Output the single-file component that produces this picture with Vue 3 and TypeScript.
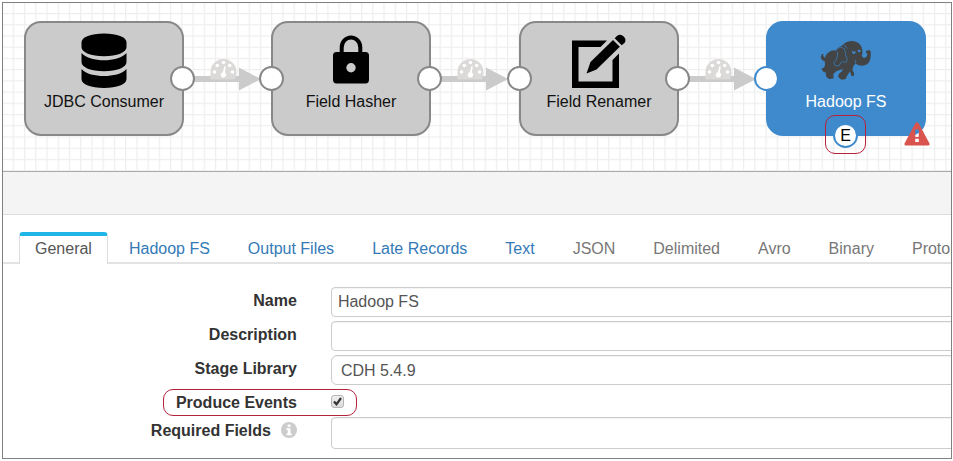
<script setup lang="ts">
import { ref } from 'vue'

type IconName = 'database' | 'lock' | 'edit' | 'elephant'

interface Stage {
  label: string
  icon: IconName
  x: number
  input: boolean
  output: boolean
  selected: boolean
}

interface Tab {
  label: string
  state: 'active' | 'link' | 'disabled'
}

const stages: Stage[] = [
  { label: 'JDBC Consumer', icon: 'database', x: 21, input: false, output: true, selected: false },
  { label: 'Field Hasher', icon: 'lock', x: 268, input: true, output: true, selected: false },
  { label: 'Field Renamer', icon: 'edit', x: 516, input: true, output: true, selected: false },
  { label: 'Hadoop FS', icon: 'elephant', x: 763, input: true, output: false, selected: true },
]

const wires: number[] = [190, 437, 685]

const tabs: Tab[] = [
  { label: 'General', state: 'active' },
  { label: 'Hadoop FS', state: 'link' },
  { label: 'Output Files', state: 'link' },
  { label: 'Late Records', state: 'link' },
  { label: 'Text', state: 'link' },
  { label: 'JSON', state: 'disabled' },
  { label: 'Delimited', state: 'disabled' },
  { label: 'Avro', state: 'disabled' },
  { label: 'Binary', state: 'disabled' },
  { label: 'Protobuf', state: 'disabled' },
]

const name = ref('Hadoop FS')
const description = ref('')
const library = ref('CDH 5.4.9')
const produceEvents = ref(true)
const requiredFields = ref('')
</script>

<template>
  <main class="frame">
    <section class="canvas">
      <svg class="wires" aria-hidden="true">
        <defs>
          <pattern id="grid" x="9.7" y="10" width="11.235" height="11.22" patternUnits="userSpaceOnUse">
            <path d="M.6 0V11.3M0 .6H11.3" stroke="#eeeeee" stroke-width="1.2" fill="none" />
          </pattern>
        </defs>
        <rect width="100%" height="100%" fill="url(#grid)" />
        <g v-for="x in wires" :key="x" :transform="`translate(${x} 0)`">
          <path d="M0 73H46V64.500L68 76L46 87.500V79H0Z" fill="#cbcbcb" />
          <path d="M18 76.500C16.500 74 17.500 76 17.500 69A13 13 0 0 1 43.500 69C43.500 72 43.500 74 41.500 76.500Z" fill="#dcdad9" />
          <g fill="#fff">
            <circle cx="21.500" cy="69" r="1.800" />
            <circle cx="24.300" cy="62.500" r="1.800" />
            <circle cx="30.500" cy="59.500" r="1.800" />
            <circle cx="36.700" cy="62.500" r="1.800" />
            <circle cx="39.500" cy="69" r="1.800" />
            <path d="M31.500 63L32.800 63.400L31.800 69.500A2.700 2.700 0 1 1 29.800 69.200Z" />
          </g>
        </g>
      </svg>

      <div
        v-for="stage in stages"
        :key="stage.label"
        class="stage"
        :class="{ selected: stage.selected }"
        :style="{ left: stage.x + 'px' }"
      >
        <svg class="stage-icon" viewBox="0 0 56 56" aria-hidden="true">
          <g v-if="stage.icon === 'database'">
            <path d="M5.500 9.500C5.500 4 15 .500 28 .500S50.500 4 50.500 9.500V14C50.500 19.500 41 23.300 28 23.300S5.500 19.500 5.500 14Z" />
            <path d="M5.500 20C10 25 19 27.300 28 27.300S46 25 50.500 20V29C50.500 34.500 41 38.300 28 38.300S5.500 34.500 5.500 29Z" />
            <path d="M5.500 36C10 41 19 43 28 43S46 41 50.500 36V46C50.500 51.500 41 55 28 55S5.500 51.500 5.500 46Z" />
          </g>
          <g v-else-if="stage.icon === 'lock'">
            <path d="M18.700 20V14.500A9.300 10 0 0 1 37.300 14.500V20" fill="none" stroke="#000" stroke-width="4" />
            <path
              fill-rule="evenodd"
              d="M13.500 19H42.500Q46 19 46 22.500V46.500Q46 50.500 42.500 50.500H13.500Q10 50.500 10 46.500V22.500Q10 19 13.500 19ZM28 30A4.700 4.700 0 1 0 28 39.400A4.700 4.700 0 1 0 28 30Z"
            />
          </g>
          <g v-else-if="stage.icon === 'edit'">
            <path d="M1 7.500H36L29.500 14H7.500V48.500H41.500V27L48 20.500V55H1Z" />
            <path d="M15.500 40.500L19.500 29L42 7L48.800 13.800L25.500 36.500Z" />
            <path d="M43.700 5.300L46.200 2.800A5.300 5.300 0 0 1 53.700 9.800L50.700 12.300Z" />
          </g>
          <g v-else transform="translate(-8.300 -3) scale(.3333)">
            <path
              class="hide"
              d="M78 61C62 60 49 70 46 84C44 80 42 79 40 77L42 72L36 73L33 82L37 90L45 94C46 103 47 110 42 113L35 116L42 127L48 127L49 138C52 143 56 146 61 147L72 145L71 132L80 124L99 117L97 124L89 130L85 138C88 145 92 148 97 149L108 147L112 137L121 124L125 137L132 139L133 128L128 119L132 106L138 101C148 108 162 109 172 103C182 96 184 82 183 64L178 60L170 62L168 67L173 72C173 80 167 85 161 83L156 78C161 67 158 49 147 40C134 31 116 31 103 41L94 49Q86 50 78 61Z"
            />
            <path class="crease" d="M78 64C84 53 93 49 101 54C108 59 106 69 109 78C114 88 113 96 107 97C101 97 97 92 93 99Q90 110 81 108Q71 106 73 98C80 90 84 80 84 66" />
            <path class="crease" d="M102 45Q110 48 113 56" />
            <path class="crease" d="M137 101Q140 94 136 89" />
            <path class="eye" d="M126 61L132 66L138 63L137 70Q131 74 128 69ZM143 60L151 59L153 65L147 67Z" />
          </g>
        </svg>
        <span class="stage-label">{{ stage.label }}</span>
        <span v-if="stage.input" class="port port-in"></span>
        <span v-if="stage.output" class="port port-out"></span>
        <template v-if="stage.selected">
          <span class="port port-event">E</span>
          <span class="callout event-callout"></span>
          <svg class="warning" viewBox="0 0 26 24" role="img" aria-label="Stage has errors">
            <path
              fill="#d9534f"
              fill-rule="evenodd"
              d="M11.500 1Q13 -.500 14.500 1L25.500 21.500Q26 23.500 24 23.500H2Q0 23.500 .500 21.500ZM11 7.500L11.400 15H14.600L15 7.500ZM11.200 16.700V20H14.800V16.700Z"
            />
          </svg>
        </template>
      </div>
    </section>

    <div class="panel-bar"></div>

    <nav class="tabs">
      <a
        v-for="tab in tabs"
        :key="tab.label"
        href="#"
        class="tab"
        :class="tab.state"
        @click.prevent
      >{{ tab.label }}</a>
    </nav>

    <form class="form" @submit.prevent>
      <label for="stage-name">Name</label>
      <input id="stage-name" v-model="name" class="field" type="text" />

      <label for="stage-description">Description</label>
      <input id="stage-description" v-model="description" class="field" type="text" />

      <label for="stage-library">Stage Library</label>
      <select id="stage-library" v-model="library" class="field library">
        <option>CDH 5.4.9</option>
      </select>

      <label for="produce-events"><span class="marked">Produce Events<span class="callout row-callout"></span></span></label>
      <span class="check">
        <input id="produce-events" v-model="produceEvents" type="checkbox" />
        <svg v-if="produceEvents" viewBox="0 0 13 13" aria-hidden="true">
          <path d="M3 6.500L5.500 9.300L10 3" fill="none" stroke="#333" stroke-width="2.200" />
        </svg>
      </span>

      <label for="required-fields" class="with-info">
        Required Fields
        <svg viewBox="0 0 16 16" aria-hidden="true">
          <circle cx="8" cy="8" r="8" fill="#cccccc" />
          <path d="M6.700 2.500H9.500V5H6.700ZM5.500 6.300H9.500V11.500H10.700V13.300H5.500V11.500H6.700V8H5.500Z" fill="#fff" />
        </svg>
      </label>
      <input id="required-fields" v-model="requiredFields" class="field tall" type="text" />
    </form>
  </main>
</template>

<style>
body {
  background: #fff;
}
</style>

<style scoped>
.frame {
  margin: 2px 1px 2px 2px;
  border: 1px solid #808080;
  overflow: hidden;
  font-family: "Liberation Sans", Arial, sans-serif;
  font-size: 16px;
  color: #333;
}

.canvas {
  position: relative;
  height: 168px;
  overflow: hidden;
}

.wires {
  display: block;
  width: 100%;
  height: 100%;
}

.stage {
  position: absolute;
  top: 18px;
  box-sizing: border-box;
  width: 160px;
  height: 115px;
  padding-top: 10px;
  border: 2px solid #888;
  border-radius: 17px;
  background: #cbcbcb;
  color: #111;
  display: flex;
  flex-direction: column;
  align-items: center;
  gap: 3px;
}

.stage.selected {
  border-color: #3f8acc;
  background: #3f8acc;
  color: #fff;
}

.stage-icon {
  width: 56px;
  height: 56px;
  flex: none;
}

.stage-label {
  line-height: 20px;
  white-space: nowrap;
}

.hide {
  fill: #424446;
}

.crease {
  fill: none;
  stroke: #3a7db8;
  stroke-width: 2.5;
}

.eye {
  fill: #3f8acc;
}

.port {
  position: absolute;
  box-sizing: border-box;
  width: 25px;
  height: 25px;
  border: 2px solid #888;
  border-radius: 50%;
  background: #fff;
}

.selected .port {
  border-color: #3f8acc;
}

.port-in {
  left: -14px;
  top: 43px;
}

.port-out {
  right: -13px;
  top: 43px;
}

.port-event {
  left: 65px;
  bottom: -14px;
  line-height: 21px;
  text-align: center;
  color: #000;
}

.callout {
  position: absolute;
  border: 1px solid #b5223a;
  border-radius: 10px;
}

.event-callout {
  left: 57px;
  bottom: -20px;
  width: 39px;
  height: 37px;
}

.warning {
  position: absolute;
  right: -6px;
  bottom: -12px;
  width: 26px;
  height: 24px;
}

.panel-bar {
  height: 42px;
  border-top: 1px solid #aaa;
  border-bottom: 1px solid #ddd;
  background: #f4f4f4;
}

.tabs {
  display: flex;
  gap: 4px;
  margin-top: 17px;
  padding-left: 16px;
  box-shadow: inset 0 -2px #e3e3e3;
}

.tab {
  flex: none;
  box-sizing: border-box;
  height: 32px;
  padding: 4px 16px 0;
  border: 1px solid transparent;
  border-bottom: 0;
  line-height: 24px;
  color: #337ab7;
  text-decoration: none;
}

.tab.disabled {
  color: #777;
}

.tab.active {
  padding: 1px 15px 0;
  border-color: #ddd;
  border-top: 4px solid #1fb5e6;
  border-radius: 4px 4px 0 0;
  background: #fff;
  color: #555;
}

.form {
  display: grid;
  grid-template-columns: 31% 1fr;
  column-gap: 34px;
  row-gap: 4px;
  padding: 23px 0 9px;
}

label {
  padding-top: 5px;
  line-height: 18px;
  font-weight: bold;
  text-align: right;
}

.field {
  box-sizing: border-box;
  width: calc(100% + 8px);
  height: 30px;
  padding: 0 6px;
  border: 1px solid #ccc;
  border-radius: 4px;
  background: #fff;
  box-shadow: inset 0 1px 1px #0000000d;
  font: inherit;
  color: #555;
  appearance: none;
}

.library {
  padding: 0 9px;
  border-radius: 6px;
}

.tall {
  height: 32px;
}

.marked {
  position: relative;
}

.row-callout {
  inset: -5px -60px -5px -13px;
}

.check {
  display: grid;
  justify-content: start;
  align-content: center;
  height: 24px;
}

.check input,
.check svg {
  grid-area: 1 / 1;
  width: 13px;
  height: 13px;
  margin: 0;
}

.check input {
  box-sizing: border-box;
  appearance: none;
  border: 1px solid #b5b5b5;
  border-radius: 3px;
  background: linear-gradient(#efefef, #dcdcdc);
}

.check svg {
  pointer-events: none;
}

.with-info {
  display: flex;
  justify-content: flex-end;
  gap: 10px;
}

.with-info svg {
  width: 16px;
  height: 16px;
}
</style>
